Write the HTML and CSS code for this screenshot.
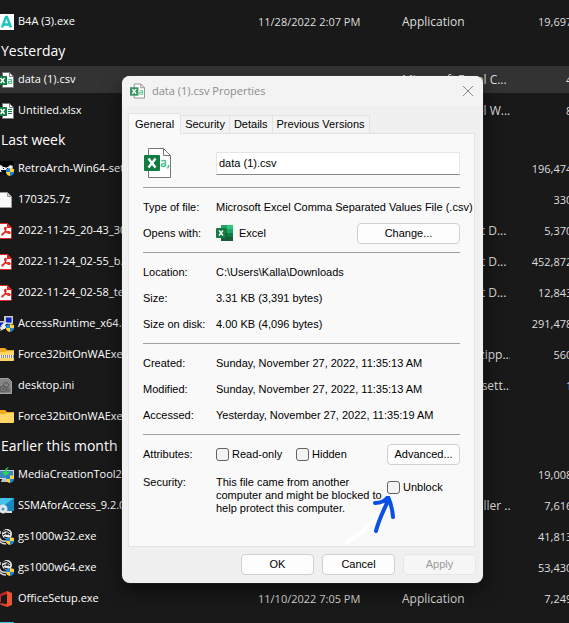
FILE: index.html
```
<!DOCTYPE html>
<html lang="en">
<head>
	<meta charset="UTF-8">
	<title>data (1).csv Properties</title>
	<link rel="stylesheet" href="styles.css">
</head>
<body>

<svg class="defs" aria-hidden="true">
	<symbol id="i-b4a" viewBox="0 0 16 16"><path fill="#fff" d="M0 0h16v16H0z"/><path fill="none" stroke="#16c5c0" stroke-width="2.400" d="M4 13.500L8 3h1L13 13.500M5.500 10.500h6"/></symbol>
	<symbol id="i-csv" viewBox="0 0 16 16"><path fill="#fff" stroke="#777" d="M4.500.500h7l4 4v11h-11z"/><path fill="none" stroke="#777" d="M11.500.500v4h4"/><path fill="#107c41" d="M0 4h9v9H0z"/><path stroke="#fff" stroke-width="1.500" d="M2.500 6l4 5M6.500 6l-4 5"/><path fill="none" stroke="#4cc38a" stroke-width="1.200" d="M10.500 7.500h3v4h-3v-2h3"/></symbol>
	<symbol id="i-xlsx" viewBox="0 0 16 16"><path fill="#fff" stroke="#777" d="M4.500.500h7l4 4v11h-11z"/><path fill="none" stroke="#777" d="M11.500.500v4h4"/><path fill="#107c41" d="M0 4h9v9H0z"/><path stroke="#fff" stroke-width="1.500" d="M2.500 6l4 5M6.500 6l-4 5"/><path stroke="#107c41" d="M10 6.500h4M10 8.500h4M10 10.500h4"/></symbol>
	<symbol id="i-shield" viewBox="0 0 8 8"><path fill="#1c84d6" d="M4 0L0 1v3h4zM4 4v4q4-1 4-4z"/><path fill="#ffd23c" d="M4 0l4 1v3H4zM4 4v4Q0 7 0 4z"/></symbol>
	<symbol id="i-retro" viewBox="0 0 16 16"><rect width="16" height="14" rx="3" fill="#050505"/><path fill="#eee" d="M0 5l3-1 2 2h5l2-2 3 1-1 4-3 1-2-1H5l-2 2H0z"/><path stroke="#111" d="M5 7.500h1M9 7.500h1M3 9.500h2M8 5v2"/><use href="#i-shield" x="8" y="7" width="8" height="8"/></symbol>
	<symbol id="i-file" viewBox="0 0 16 16"><path fill="#fafafa" stroke="#999" d="M1.500.500h8l4 4v11h-12z"/><path fill="#ccc" stroke="#999" d="M9.500.500v4h4z"/></symbol>
	<symbol id="i-pdf" viewBox="0 0 16 16"><path fill="#fff" stroke="#e2231a" d="M1.500 1.500q0-1 1-1h7l4 4v10q0 1-1 1h-10q-1 0-1-1z"/><path fill="#e2231a" d="M9 0l5 5H9z"/><path fill="none" stroke="#e2231a" stroke-width="1.300" d="M7.500 4.500c-2 0 0 4 1.500 5s3.500 1 3 0-4-.500-5.500 0-3 2-2.500 2.500S8 8 8 6s0-1.500-.500-1.500z"/></symbol>
	<symbol id="i-setup" viewBox="0 0 16 16"><path fill="#c8c8c8" d="M6 0h9v8H6zM0 5h7v8H0z"/><path fill="#0a22c8" d="M8 1.500h5.500v5H8zM0 6.500h5v4H0z"/><path fill="#eee" d="M3 9l6-3-2 4 3 1-8 4 2-4z"/><use href="#i-shield" x="8" y="8" width="8" height="8"/></symbol>
	<symbol id="i-zip" viewBox="0 0 16 16"><path fill="#f0a81c" d="M0 1h7l2 2h7v5H0z"/><path fill="#ffd666" d="M0 5h7l1-1h8v9q0 1-1 1H0z"/><path fill="#8c8c8c" d="M0 8h16v3H0z"/><path stroke="#eee" stroke-width="3" stroke-dasharray="1 1" d="M0 9.500h16"/></symbol>
	<symbol id="i-ini" viewBox="0 0 16 16"><path fill="#858585" stroke="#a0a0a0" d="M1.500.500h9l3 3v12h-12z"/><g fill="none" stroke="#555"><circle cx="8" cy="7" r="2.500"/><circle cx="5" cy="11" r="3"/><circle cx="5" cy="11" r="1"/><circle cx="10" cy="12" r="1.500"/></g></symbol>
	<symbol id="i-folder" viewBox="0 0 16 16"><path fill="#f0a81c" d="M0 1h7l2 2h7v5H0z"/><path fill="#ffd666" d="M0 5h7l1-1h8v9q0 1-1 1H0z"/></symbol>
	<symbol id="i-media" viewBox="0 0 16 16"><path fill="#c9d4dc" d="M0 3h16v9H0z"/><path fill="#3f86b8" d="M1 4h14v7H1z"/><path fill="#b8c2c8" d="M4 12h6l1 3H3z"/><path fill="#27d858" d="M12 0q-3 0-3 5h3L7.500 9 4 5h3q0-5 5-5z"/><use href="#i-shield" x="8" y="8" width="8" height="8"/></symbol>
	<symbol id="i-ssma" viewBox="0 0 16 16"><path fill="#1689c4" d="M0 0h16v13H0z"/><path fill="#45c1e8" d="M0 0h16L4 9H0z"/><circle cx="5" cy="11" r="4.500" fill="#dfe6ea"/><circle cx="5" cy="11" r="1.500" fill="#5794b5"/><path fill="#ddd" d="M8 13h6v2H8z"/></symbol>
	<symbol id="i-gs" viewBox="0 0 16 16"><circle cx="9" cy="5" r="5" fill="#e8e8e8"/><path fill="none" stroke="#111" stroke-width="1.200" d="M5 3q4-3 7 1M5 6q4-3 7 0M6 8l4 1M9 3v3"/><path fill="none" stroke="#ddd" stroke-width="1.500" d="M1 7q1 6 7 5M1 12q3 3 7 3M2 2v3"/><use href="#i-shield" x="8" y="8" width="8" height="8"/></symbol>
	<symbol id="i-office" viewBox="0 0 16 16"><path fill="#c32b20" d="M9 0L3 2.500 1 5v7l2-1V5l6-2z"/><path fill="#f0522d" d="M9 0l5 2v12l-5 2z"/><path fill="#e0412c" d="M1 12l8 1v3L3 14z"/></symbol>
</svg>

<table class="files">
	<colgroup><col class="c-name"><col class="c-date"><col class="c-type"><col class="c-size"></colgroup>
	<tbody>
		<tr><td><svg><use href="#i-b4a"/></svg>B4A (3).exe</td><td>11/28/2022 2:07 PM</td><td>Application</td><td>19,697 KB</td></tr>
	</tbody>
	<tbody>
		<tr><th colspan="4">Yesterday</th></tr>
		<tr class="selected"><td><svg><use href="#i-csv"/></svg>data (1).csv</td><td>11/27/2022 11:35 AM</td><td>Microsoft Excel C...</td><td>4 KB</td></tr>
		<tr><td><svg><use href="#i-xlsx"/></svg>Untitled.xlsx</td><td>11/27/2022 11:20 AM</td><td>Microsoft Excel W...</td><td>8 KB</td></tr>
	</tbody>
	<tbody>
		<tr><th colspan="4">Last week</th></tr>
		<tr><td><svg><use href="#i-retro"/></svg>RetroArch-Win64-setup.exe</td><td>11/26/2022 4:10 PM</td><td>Application</td><td>196,474 KB</td></tr>
		<tr><td><svg><use href="#i-file"/></svg>170325.7z</td><td>11/26/2022 3:52 PM</td><td>7Z File</td><td>330 KB</td></tr>
		<tr><td><svg><use href="#i-pdf"/></svg>2022-11-25_20-43_30.pdf</td><td>11/25/2022 8:43 PM</td><td>Adobe Acrobat D...</td><td>5,370 KB</td></tr>
		<tr><td><svg><use href="#i-pdf"/></svg>2022-11-24_02-55_b.pdf</td><td>11/24/2022 2:55 AM</td><td>Adobe Acrobat D...</td><td>452,872 KB</td></tr>
		<tr><td><svg><use href="#i-pdf"/></svg>2022-11-24_02-58_te.pdf</td><td>11/24/2022 2:58 AM</td><td>Adobe Acrobat D...</td><td>12,843 KB</td></tr>
		<tr><td><svg><use href="#i-setup"/></svg>AccessRuntime_x64.exe</td><td>11/23/2022 1:14 PM</td><td>Application</td><td>291,478 KB</td></tr>
		<tr><td><svg><use href="#i-zip"/></svg>Force32bitOnWAExe.zip</td><td>11/22/2022 9:31 AM</td><td>Compressed (zipp...</td><td>560 KB</td></tr>
		<tr><td><svg><use href="#i-ini"/></svg>desktop.ini</td><td>11/22/2022 9:30 AM</td><td>Configuration sett...</td><td>1 KB</td></tr>
		<tr><td><svg><use href="#i-folder"/></svg>Force32bitOnWAExe</td><td>11/22/2022 9:31 AM</td><td>File folder</td><td></td></tr>
	</tbody>
	<tbody>
		<tr><th colspan="4">Earlier this month</th></tr>
		<tr><td><svg><use href="#i-media"/></svg>MediaCreationTool22H2.exe</td><td>11/15/2022 6:20 PM</td><td>Application</td><td>19,008 KB</td></tr>
		<tr><td><svg><use href="#i-ssma"/></svg>SSMAforAccess_9.2.0.msi</td><td>11/14/2022 2:12 PM</td><td>Windows Installer ...</td><td>7,616 KB</td></tr>
		<tr><td><svg><use href="#i-gs"/></svg>gs1000w32.exe</td><td>11/12/2022 5:01 PM</td><td>Application</td><td>41,813 KB</td></tr>
		<tr><td><svg><use href="#i-gs"/></svg>gs1000w64.exe</td><td>11/12/2022 5:00 PM</td><td>Application</td><td>53,430 KB</td></tr>
		<tr><td><svg><use href="#i-office"/></svg>OfficeSetup.exe</td><td>11/10/2022 7:05 PM</td><td>Application</td><td>7,249 KB</td></tr>
		<tr><td><svg><use href="#i-ssma"/></svg></td><td></td><td></td><td></td></tr>
	</tbody>
</table>

<form class="dialog">
	<header class="titlebar">
		<svg class="title-icon"><use href="#i-csv"/></svg>
		<h1>data (1).csv Properties</h1>
		<button type="button" class="close" aria-label="Close"><svg viewBox="0 0 10 10"><path d="M0 0l10 10M10 0L0 10"/></svg></button>
	</header>

	<nav class="tabs">
		<button type="button" class="active">General</button>
		<button type="button">Security</button>
		<button type="button">Details</button>
		<button type="button">Previous Versions</button>
	</nav>

	<div class="panel">
		<div class="row name-row">
			<svg class="file-icon" viewBox="0 0 28 30">
				<path fill="#fff" stroke="#777" d="M4.500.500h15l7 7v22h-22z"/>
				<path fill="none" stroke="#777" d="M19.500.500v7h7"/>
				<rect y="7" width="16" height="16" rx="1" fill="#107c41"/>
				<path stroke="#fff" stroke-width="2.400" d="M4.500 10.500l7 9M11.500 10.500l-7 9"/>
				<path fill="none" stroke="#4cc38a" stroke-width="1.500" d="M17.500 13q4-1.500 4 1v4.500M21.500 15.500c-5-.500-5 3-2.500 3q2 0 2.500-1.500M24.500 17v1.500l-1 2"/>
			</svg>
			<input type="text" value="data (1).csv" aria-label="File name">
		</div>

		<section>
			<div class="row"><span>Type of file:</span><span>Microsoft Excel Comma Separated Values File (.csv)</span></div>
			<div class="row">
				<span>Opens with:</span>
				<span class="app">
					<svg viewBox="0 0 17 16">
						<path fill="#21a366" d="M5 0h12v8H5z"/><path fill="#107c41" d="M5 4h6v8H5z"/><path fill="#33c481" d="M11 0h6v4h-6z"/><path fill="#185c37" d="M5 8h12v8H5z"/><path fill="#107c41" d="M11 8h6v4h-6z"/>
						<rect y="3" width="10" height="10" rx="1" fill="#107c41"/><path stroke="#fff" stroke-width="1.500" d="M3 5.500l4 5M7 5.500l-4 5"/>
					</svg>
					Excel
				</span>
				<button type="button" class="change">Change...</button>
			</div>
		</section>

		<section>
			<div class="row"><span>Location:</span><span>C:\Users\Kalla\Downloads</span></div>
			<div class="row"><span>Size:</span><span>3.31 KB (3,391 bytes)</span></div>
			<div class="row"><span>Size on disk:</span><span>4.00 KB (4,096 bytes)</span></div>
		</section>

		<section>
			<div class="row"><span>Created:</span><span>Sunday, November 27, 2022, 11:35:13 AM</span></div>
			<div class="row"><span>Modified:</span><span>Sunday, November 27, 2022, 11:35:13 AM</span></div>
			<div class="row"><span>Accessed:</span><span>Yesterday, November 27, 2022, 11:35:19 AM</span></div>
		</section>

		<section>
			<div class="row">
				<span>Attributes:</span>
				<label class="check readonly"><input type="checkbox">Read-only</label>
				<label class="check"><input type="checkbox">Hidden</label>
				<button type="button" class="advanced">Advanced...</button>
			</div>
			<div class="row security">
				<span>Security:</span>
				<p>This file came from another<br>computer and might be blocked to<br>help protect this computer.</p>
				<label class="check"><input type="checkbox">Unblock</label>
			</div>
		</section>
	</div>

	<footer class="actions">
		<button type="submit">OK</button>
		<button type="button">Cancel</button>
		<button type="button" disabled>Apply</button>
	</footer>

	<!-- hand drawn pointer to the Unblock box -->
	<svg class="arrow" viewBox="0 0 54 50">
		<path stroke="#fff" d="M3 46q17-9 28-23"/>
		<path stroke="#0a50e6" d="M32 35q3-12 13-32M31 7q9 0 13-6 4 8 5 20"/>
	</svg>
</form>

</body>
</html>
```

FILE: styles.css
```
* {
	box-sizing: border-box;
}

body {
	margin: 0;
	height: 100vh;
	overflow: hidden;
	background: #191919;
	color: #fff;
	font: 11px/16px "Open Sans", "Noto Sans", sans-serif;
}

button, input {
	font: inherit;
	color: inherit;
}

.defs {
	position: absolute;
	width: 0;
	height: 0;
}

/* file list */
.files {
	width: calc(100% + 22px);
	margin: 6px 0 0 -2px;
	border-collapse: collapse;
	table-layout: fixed;
	white-space: nowrap;
}

.c-name { width: 260px; }
.c-date { width: 144px; }
.c-type { width: 108px; }

.files td {
	height: 31px;
	padding: 0;
	overflow: hidden;
	color: #dedede;
}

.files td:first-child {
	color: #fff;
}

.files td:nth-child(3) {
	font-size: 12px;
}

.files td:last-child {
	text-align: right;
}

.files td svg {
	width: 16px;
	height: 16px;
	margin-right: 4px;
	vertical-align: middle;
}

.files th {
	height: 27px;
	padding: 0 0 0 3px;
	font-size: 14px;
	font-weight: normal;
	text-align: left;
}

.selected td {
	background: linear-gradient(#333, #333) no-repeat 0 2px / 100% 27px;
}

/* properties window */
.dialog {
	position: absolute;
	top: 76px;
	left: 122px;
	width: 361px;
	border-radius: 8px;
	background: #f0f0f0;
	color: #000;
	font: 11px/13px "Liberation Sans", Arial, sans-serif;
	box-shadow: 0 0 1px #777, 0 8px 20px rgba(0, 0, 0, .5);
}

.titlebar {
	display: flex;
	align-items: center;
	height: 30px;
	padding: 0 10px 0 8px;
	border-radius: 8px 8px 0 0;
	background: #f3f3f3;
	color: #8c8c8c;
}

.title-icon {
	width: 15px;
	height: 16px;
	opacity: .8;
}

.titlebar h1 {
	flex: 1;
	margin: 0 0 0 7px;
	font: 11px/16px "Open Sans", sans-serif;
}

.close {
	padding: 0;
	border: 0;
	background: none;
}

.close svg {
	display: block;
	width: 10px;
	height: 10px;
	fill: none;
	stroke: #888;
	overflow: visible;
}

.tabs {
	display: flex;
	align-items: flex-end;
	height: 27px;
	padding: 0 6px;
}

.tabs button {
	height: 18px;
	padding: 0 4px;
	border: 1px solid #e3e3e3;
	border-width: 1px 1px 0 0;
	background: #f3f3f3;
}

.tabs .active {
	position: relative;
	z-index: 1;
	height: 21px;
	margin-bottom: -1px;
	padding: 0 6px;
	border-left-width: 1px;
	background: #f9f9f9;
}

.panel {
	height: 414px;
	margin: 0 8px 0 6px;
	padding: 0 14px;
	border: 1px solid #e3e3e3;
	background: #f9f9f9;
}

.row {
	display: flex;
	align-items: center;
	height: 26px;
	white-space: nowrap;
}

.row > span:first-child {
	flex: none;
	width: 73px;
}

.name-row {
	height: 53px;
	padding-top: 5px;
}

.file-icon {
	width: 28px;
	height: 30px;
	margin: 0 44px 0 1px;
}

.name-row input {
	flex: 1;
	min-width: 0;
	height: 23px;
	padding: 0 2px;
	border: 1px solid #e6e6e6;
	border-bottom-color: #868686;
	background: #fff;
}

section {
	padding: 6px 0;
	border-top: 1px solid #a0a0a0;
}

.app {
	display: flex;
	align-items: center;
	gap: 6px;
}

.app svg {
	width: 17px;
	height: 16px;
}

.panel button,
.actions button {
	height: 21px;
	padding: 0;
	border: 1px solid #d0d0d0;
	border-radius: 4px;
	background: #fdfdfd;
}

.panel button {
	margin-left: auto;
}

.change { width: 103px; }
.advanced { width: 73px; }

.check {
	display: flex;
	align-items: center;
	gap: 3px;
}

.readonly {
	width: 80px;
}

.check input {
	appearance: none;
	width: 13px;
	height: 13px;
	margin: 0;
	border: 1px solid #626262;
	border-radius: 3px;
	background: #f3f3f3;
}

.security {
	align-items: flex-start;
	height: auto;
	padding-top: 9px;
}

.security p {
	width: 171px;
	margin: 0;
}

.security .check {
	margin-top: 5px;
}

.actions {
	display: flex;
	justify-content: flex-end;
	gap: 8px;
	padding: 7px 7px 8px;
}

.actions button {
	width: 73px;
}

.actions button:disabled {
	border-color: #e6e6e6;
	background: #f6f6f6;
	color: #9a9a9a;
}

.arrow {
	position: absolute;
	right: 85px;
	bottom: 37px;
	width: 54px;
	height: 50px;
	fill: none;
	stroke-width: 4px;
	stroke-linecap: round;
	stroke-linejoin: round;
	pointer-events: none;
}
```
